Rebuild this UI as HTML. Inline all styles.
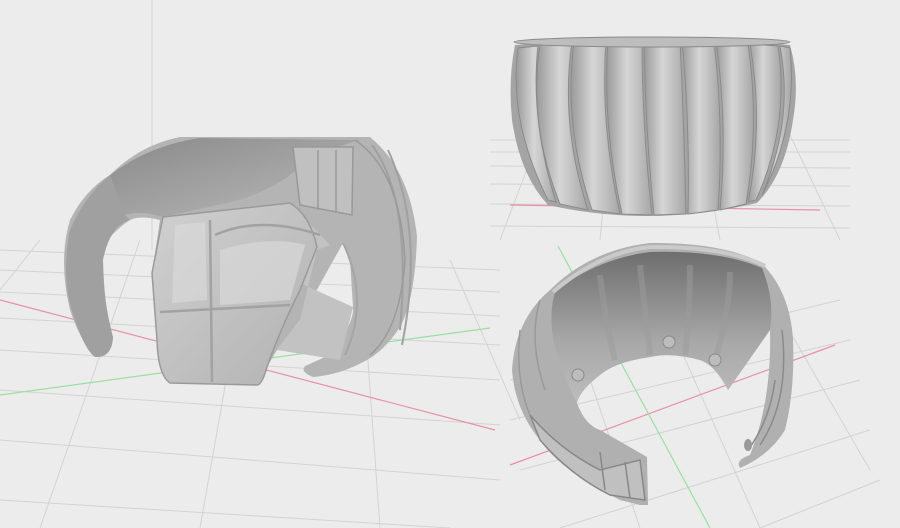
<!DOCTYPE html>
<html><head><style>html,body{margin:0;padding:0;background:#ececec;}svg{display:block}</style></head>
<body>
<svg width="900" height="528" viewBox="0 0 900 528" xmlns="http://www.w3.org/2000/svg">
<defs>
<radialGradient id="g1" cx="0.45" cy="0.4" r="0.75"><stop offset="0" stop-color="#d2d2d2"/><stop offset="0.7" stop-color="#b0b0b0"/><stop offset="1" stop-color="#8a8a8a"/></radialGradient>
<linearGradient id="rib" x1="0" x2="1"><stop offset="0" stop-color="#9a9a9a"/><stop offset="0.45" stop-color="#d6d6d6"/><stop offset="1" stop-color="#a6a6a6"/></linearGradient>
<linearGradient id="inner" x1="0" y1="0" x2="0" y2="1"><stop offset="0" stop-color="#6e6e6e"/><stop offset="0.6" stop-color="#a8a8a8"/><stop offset="1" stop-color="#bdbdbd"/></linearGradient>
<linearGradient id="band" x1="0" y1="0" x2="1" y2="1"><stop offset="0" stop-color="#8a8a8a"/><stop offset="0.6" stop-color="#a6a6a6"/><stop offset="1" stop-color="#c4c4c4"/></linearGradient>
<linearGradient id="shield" x1="0" y1="0" x2="1" y2="1"><stop offset="0" stop-color="#d0d0d0"/><stop offset="1" stop-color="#b2b2b2"/></linearGradient>
</defs>
<rect width="900" height="528" fill="#ececec"/>
<g stroke="#d3d3d3" stroke-width="1" fill="none">
<line x1="152" y1="0" x2="152" y2="250"/>
<path d="M0 250 L500 270 M0 270 L500 292 M0 292 L500 316 M0 318 L500 345 M0 350 L500 380 M0 390 L500 425 M0 440 L500 480 M0 500 L450 528"/>
<path d="M40 240 L0 290 M140 240 L40 528 M250 245 L200 528 M360 250 L380 528 M450 260 L520 420"/>
<path d="M490 140 L850 140 M490 152 L850 152 M490 166 L850 168 M490 184 L850 186 M490 204 L850 206 M490 226 L850 228"/>
<path d="M540 135 L500 240 M610 135 L600 240 M700 135 L720 240 M790 135 L840 240"/>
<path d="M510 380 L840 300 M510 420 L850 340 M520 470 L860 380 M560 528 L870 430 M760 528 L880 480"/>
<path d="M560 290 L640 528 M650 280 L760 528 M760 280 L870 470"/>
</g>
<line x1="0" y1="300" x2="495" y2="430" stroke="#e890a8" stroke-width="1.2"/>
<line x1="0" y1="395" x2="490" y2="328" stroke="#98e0a2" stroke-width="1.2"/>
<line x1="510" y1="205" x2="820" y2="210" stroke="#e890a8" stroke-width="1.2"/>
<line x1="510" y1="465" x2="835" y2="345" stroke="#e890a8" stroke-width="1.2"/>
<line x1="558" y1="246" x2="710" y2="528" stroke="#98e0a2" stroke-width="1.2"/>

<!-- left object -->
<path d="M95 357 Q80 340 70 310 Q58 260 70 220 Q85 190 110 175 Q140 145 180 137 L370 137 Q410 170 417 237 Q415 300 400 327 Q385 350 367 360 Q340 375 313 377 Q300 372 305 366 Q330 355 333 353 Q355 320 353 307 L350 260 L343 243 L300 320 L277 350 L267 367 Q262 385 257 385 L170 383 Q158 375 157 340 L152 273 L160 220 Q140 215 130 220 Q100 240 103 260 Q105 320 113 337 Q112 358 95 357Z" fill="#b4b4b4"/>
<path d="M110 175 Q150 145 200 138 L360 140 Q320 150 290 175 Q270 190 240 200 L163 217 Q140 210 125 215 Q108 200 110 175Z" fill="url(#band)"/>
<path d="M110 175 Q85 195 70 230 Q60 280 75 320 Q85 350 95 357 Q112 358 113 337 Q103 300 103 260 Q110 225 130 220 L125 215Z" fill="#a0a0a0"/>
<path d="M160 220 L290 203 L330 245 L317 250 L300 320 L277 350 L340 360 L353 307 Z" fill="#c2c2c2"/>
<path d="M163 217 L290 203 Q310 215 317 247 L300 290 Q280 330 267 367 Q262 385 257 385 L170 383 Q158 375 157 340 L152 273 Z" fill="url(#shield)" stroke="#9a9a9a" stroke-width="1.5"/>
<path d="M210 220 L212 382 M160 312 L290 305 M215 235 Q260 215 320 235" stroke="#a2a2a2" stroke-width="2.5" fill="none"/>
<path d="M175 225 L205 222 L207 300 L172 303Z M220 250 Q270 235 305 245 L290 300 L220 305Z" fill="#d8d8d8" opacity="0.7"/>
<path d="M293 147 L353 147 L352 215 L300 205 Z" fill="#c0c0c0" stroke="#999" stroke-width="1.5"/>
<path d="M318 150 L318 210 M336 150 L336 212" stroke="#999" stroke-width="1.5"/>
<path d="M343 243 Q370 300 345 355" stroke="#a5a5a5" stroke-width="2" fill="none"/>
<path d="M372 145 Q412 200 400 330 M388 150 Q425 230 402 345" stroke="#a0a0a0" stroke-width="2" fill="none"/>
<path d="M355 140 Q400 170 405 260 Q400 330 370 355" stroke="#9a9a9a" stroke-width="1.5" fill="none"/>

<!-- top right pumpkin -->
<path d="M515 45 Q650 32 790 45 Q800 80 793 120 Q785 175 757 203 Q650 228 548 205 Q520 175 512 120 Q508 80 515 45Z" fill="#a4a4a4"/>
<g fill="url(#rib)" stroke="#8a8a8a" stroke-width="1">
<path d="M518 48 Q508 120 548 200 L556 202 Q530 120 538 46Z"/>
<path d="M540 45 Q528 125 560 204 L588 210 Q560 125 572 42Z"/>
<path d="M574 42 Q563 125 592 210 L620 214 Q600 125 606 40Z"/>
<path d="M608 40 Q602 125 622 214 L652 215 Q642 125 642 40Z"/>
<path d="M644 40 Q645 125 654 215 L686 214 Q684 125 680 40Z"/>
<path d="M682 40 Q690 125 688 214 L718 210 Q724 125 714 42Z"/>
<path d="M716 42 Q728 125 720 210 L746 204 Q760 125 748 44Z"/>
<path d="M750 44 Q764 125 748 202 L756 200 Q790 125 778 46Z"/>
<path d="M780 46 Q794 120 762 195 Q798 125 790 48Z"/>
</g>
<ellipse cx="652" cy="42" rx="138" ry="5" fill="#bdbdbd" stroke="#8a8a8a"/>

<!-- bottom right cuff -->
<path d="M640 505 L620 500 Q560 470 540 440 Q515 410 512 370 Q515 320 550 290 Q590 250 650 243 Q720 242 760 262 Q790 290 793 340 Q795 390 785 430 Q770 455 740 468 Q735 460 750 455 Q772 400 770 330 L728 390 Q715 365 700 360 Q670 352 650 357 Q615 362 600 375 Q580 390 577 403 Q585 425 600 430 L647 457 L648 505Z" fill="#b0b0b0"/>
<path d="M556 290 Q600 258 650 252 Q720 250 762 268 Q775 300 770 330 L728 390 Q715 365 700 360 Q670 352 650 357 Q615 362 600 375 Q580 390 577 403 Q555 360 552 330 Q550 305 556 290Z" fill="url(#inner)"/>
<path d="M553 292 Q600 252 650 247 Q725 246 765 266" stroke="#cacaca" stroke-width="4" fill="none"/>
<path d="M600 275 Q605 320 615 360 M640 265 Q645 310 650 355 M690 265 Q690 310 685 355 M730 272 Q730 310 715 360" stroke="#9c9c9c" stroke-width="6" fill="none" opacity="0.5"/>
<circle cx="578" cy="375" r="6" fill="#bdbdbd" stroke="#8a8a8a"/>
<circle cx="669" cy="342" r="6" fill="#bdbdbd" stroke="#8a8a8a"/>
<circle cx="715" cy="360" r="6" fill="#bdbdbd" stroke="#8a8a8a"/>
<path d="M530 415 Q560 450 600 470 L640 460 L645 500 L610 495 Q570 475 540 440Z" fill="#c0c0c0" stroke="#888" stroke-width="1.5"/>
<path d="M600 452 L605 490 M625 462 L630 498" stroke="#888" stroke-width="1.5"/>
<path d="M520 330 Q515 380 530 415 M540 300 Q528 340 545 390" stroke="#999" stroke-width="1.5" fill="none"/>
<path d="M782 330 Q790 400 760 445 M775 380 Q770 420 748 450" stroke="#8a8a8a" stroke-width="1.5" fill="none"/>
<ellipse cx="748" cy="445" rx="4" ry="6" fill="#999"/>
</svg>
</body></html>
